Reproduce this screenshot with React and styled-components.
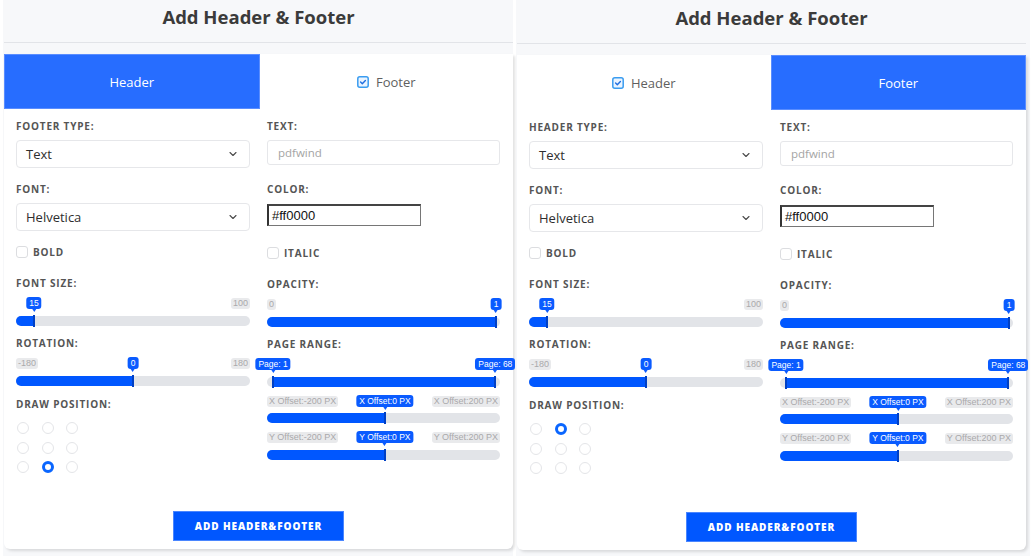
import React from "react";
import styled, { createGlobalStyle } from "styled-components";
import { ChevronDown } from "lucide-react";

const GlobalStyle = createGlobalStyle`
  html, body { margin: 0; padding: 0; background: #ffffff; }
  body { font-family: "Open Sans", "Liberation Sans", sans-serif; }
  * { box-sizing: border-box; }
`;

const Page = styled.div`
  display: flex;
  flex-direction: row;
  align-items: flex-start;
  gap: 3px;
  padding-left: 3px;
  width: 1033px;
  height: 556px;
  overflow: hidden;
`;

const Panel = styled.div`
  width: ${(p) => p.$width}px;
  height: 556px;
  background: #f7f8fa;
  padding-top: ${(p) => p.$shift}px;
  display: flex;
  flex-direction: column;
`;

const TitleBar = styled.div`
  width: 509px;
  margin-left: 1px;
  height: 43px;
  padding-bottom: 9px;
  border-bottom: 1px solid #e2e4e8;
  display: flex;
  align-items: center;
  justify-content: center;
  font-size: 18.5px;
  font-weight: 700;
  color: #3b3b3b;
`;

const Card = styled.div`
  width: 509px;
  height: 495px;
  margin: 11px 0 0 1px;
  background: #ffffff;
  border-radius: 0 0 6px 6px;
  box-shadow: 2px 2px 3px rgba(0, 0, 0, 0.12);
  display: flex;
  flex-direction: column;
`;

const Tabs = styled.div`
  display: flex;
  flex-direction: row;
  height: 55px;
`;

const Tab = styled.div`
  flex: 1;
  display: flex;
  align-items: center;
  justify-content: center;
  gap: 7px;
  padding-top: 1px;
  font-size: 13px;
  color: ${(p) => (p.$active ? "#ffffff" : "#5f5f5f")};
  background: ${(p) => (p.$active ? "#276dff" : "#ffffff")};
  border: ${(p) => (p.$active ? "1px solid #5a8dff" : "none")};
`;

const Columns = styled.div`
  display: grid;
  grid-template-columns: 234px 233px;
  column-gap: 17px;
  padding: 10px 0 0 12px;
`;

const Column = styled.div`
  display: flex;
  flex-direction: column;
`;

const Label = styled.div`
  height: 14px;
  line-height: 14px;
  font-size: 10px;
  font-weight: 700;
  letter-spacing: 0.8px;
  color: #555555;
  margin-top: ${(p) => p.$mt || 0}px;
`;

const Select = styled.div`
  margin-top: 7px;
  height: 28px;
  border: 1px solid #e6e7ea;
  border-radius: 4px;
  display: flex;
  align-items: center;
  justify-content: space-between;
  padding: 0 10px 0 9px;
  font-size: 13px;
  color: #2e2e2e;
`;

const TextInput = styled.div`
  margin-top: 7px;
  height: 25px;
  border: 1px solid #e6e7ea;
  border-radius: 3px;
  display: flex;
  align-items: center;
  padding: 0 10px;
  font-size: 11.5px;
  color: #a4a4a4;
`;

const ColorInput = styled.div`
  margin-top: 8px;
  width: 154px;
  height: 22px;
  border: 1px solid #767676;
  border-left: 2px solid #333333;
  border-top: 2px solid #444444;
  display: flex;
  align-items: center;
  padding: 0 3px;
  font-family: "Liberation Sans", Arial, sans-serif;
  font-size: 13px;
  color: #111111;
`;

const CheckRow = styled.div`
  margin-top: ${(p) => p.$mt}px;
  height: 14px;
  display: flex;
  align-items: center;
  gap: 5px;
  font-size: 10px;
  font-weight: 700;
  letter-spacing: 0.8px;
  color: #555555;
`;

const Box = styled.span`
  width: 12px;
  height: 12px;
  border: 1px solid #dcdde0;
  border-radius: 3px;
  background: #fff;
`;

const SliderWrap = styled.div`
  margin-top: ${(p) => p.$mt}px;
  display: flex;
  flex-direction: column;
  gap: ${(p) => p.$gap}px;
`;

const TipRow = styled.div`
  position: relative;
  height: 14px;
  display: flex;
  align-items: center;
  justify-content: space-between;
`;

const Bound = styled.span`
  height: 11px;
  line-height: 11px;
  padding: 0 2px;
  border-radius: 3px;
  background: ${(p) => (p.$empty ? "transparent" : "#e9eaec")};
  color: #a9a9ab;
  font-family: "Liberation Sans", Arial, sans-serif;
  font-size: 9px;
  white-space: nowrap;
`;

const Tip = styled.span`
  position: absolute;
  top: 1px;
  left: ${(p) => p.$pct}%;
  transform: translateX(-50%);
  height: 12px;
  line-height: 12px;
  padding: 0 3px;
  border-radius: 3px;
  background: #0a5bff;
  color: #ffffff;
  font-family: "Liberation Sans", Arial, sans-serif;
  font-size: 8.5px;
  white-space: nowrap;
  &::after {
    content: "";
    position: absolute;
    left: 50%;
    bottom: -3px;
    transform: translateX(-50%);
    border-left: 2px solid transparent;
    border-right: 2px solid transparent;
    border-top: 3px solid #0a5bff;
  }
`;

const Track = styled.div`
  position: relative;
  height: 10px;
  border-radius: 5px;
  background: #e2e4e8;
`;

const Fill = styled.div`
  position: absolute;
  top: 0;
  bottom: 0;
  left: ${(p) => p.$from}%;
  width: ${(p) => p.$to - p.$from}%;
  border-radius: ${(p) => (p.$from > 0 ? "0" : "5px 0 0 5px")};
  background: #0057ff;
`;

const Thumb = styled.div`
  position: absolute;
  top: -1px;
  left: ${(p) => p.$pct}%;
  width: 2px;
  height: 12px;
  margin-left: -1px;
  background: #0040c4;
`;

const Slider = ({ mt, gap = 6, min, max, thumbs, from = 0 }) => {
  const to = thumbs[thumbs.length - 1].pct;
  return (
    <SliderWrap $mt={mt} $gap={gap}>
      <TipRow>
        <Bound $empty={!min}>{min}</Bound>
        <Bound $empty={!max}>{max}</Bound>
        {thumbs.map((t) => (
          <Tip key={t.label} $pct={t.pct}>
            {t.label}
          </Tip>
        ))}
      </TipRow>
      <Track>
        <Fill $from={from} $to={to} />
        {thumbs.map((t) => (
          <Thumb key={t.label} $pct={t.pct} />
        ))}
      </Track>
    </SliderWrap>
  );
};

const RadioGrid = styled.div`
  margin-top: 11px;
  display: grid;
  grid-template-columns: repeat(3, 12px);
  column-gap: 12.5px;
  row-gap: 7.5px;
  padding-left: 1px;
`;

const Radio = styled.span`
  width: 12px;
  height: 12px;
  border-radius: 50%;
  background: #fff;
  border: ${(p) => (p.$on ? "3px solid #0a66ff" : "1px solid #e4e5e8")};
`;

const Footer = styled.div`
  margin-top: auto;
  margin-bottom: 8px;
  display: flex;
  justify-content: center;
`;

const Button = styled.button`
  width: 171px;
  height: 30px;
  border: 1px solid #4a86ff;
  background: #0057ff;
  color: #ffffff;
  font-family: "Open Sans", "Liberation Sans", sans-serif;
  font-size: 10px;
  font-weight: 800;
  letter-spacing: 0.9px;
`;

const TabCheck = () => (
  <svg width="12" height="12" viewBox="0 0 12 12">
    <rect x="0.8" y="0.8" width="10.4" height="10.4" rx="2" fill="#eaf4ff" stroke="#3a9cf0" strokeWidth="1.5" />
    <path d="M3.6 6.1 L5.3 7.7 L8.4 4.4" fill="none" stroke="#1f6fe0" strokeWidth="1.4" strokeLinecap="round" strokeLinejoin="round" />
  </svg>
);

const HeaderFooterPanel = ({ width, shift, mode, selected }) => {
  const isFooter = mode === "footer";
  return (
    <Panel $width={width} $shift={shift}>
      <TitleBar>Add Header &amp; Footer</TitleBar>
      <Card>
        <Tabs>
          <Tab $active={isFooter}>
            {!isFooter && <TabCheck />}
            Header
          </Tab>
          <Tab $active={!isFooter}>
            {isFooter && <TabCheck />}
            Footer
          </Tab>
        </Tabs>
        <Columns>
          <Column>
            <Label>{isFooter ? "FOOTER TYPE:" : "HEADER TYPE:"}</Label>
            <Select>
              Text
              <ChevronDown size={12} strokeWidth={2.2} color="#4a4a4a" />
            </Select>
            <Label $mt={14}>FONT:</Label>
            <Select>
              Helvetica
              <ChevronDown size={12} strokeWidth={2.2} color="#4a4a4a" />
            </Select>
            <CheckRow $mt={14}>
              <Box />
              BOLD
            </CheckRow>
            <Label $mt={17}>FONT SIZE:</Label>
            <Slider mt={6} min="" max="100" thumbs={[{ pct: 7.7, label: "15" }]} />
            <Label $mt={10}>ROTATION:</Label>
            <Slider mt={6} min="-180" max="180" thumbs={[{ pct: 50, label: "0" }]} />
            <Label $mt={11}>DRAW POSITION:</Label>
            <RadioGrid>
              {Array.from({ length: 9 }, (_, i) => (
                <Radio key={i} $on={i === selected} />
              ))}
            </RadioGrid>
          </Column>
          <Column>
            <Label>TEXT:</Label>
            <TextInput>pdfwind</TextInput>
            <Label $mt={17}>COLOR:</Label>
            <ColorInput>#ff0000</ColorInput>
            <CheckRow $mt={20}>
              <Box />
              ITALIC
            </CheckRow>
            <Label $mt={17}>OPACITY:</Label>
            <Slider mt={6} min="0" max="" thumbs={[{ pct: 98.3, label: "1" }]} />
            <Label $mt={10}>PAGE RANGE:</Label>
            <Slider
              mt={6}
              min=""
              max=""
              from={2.6}
              thumbs={[
                { pct: 2.6, label: "Page: 1" },
                { pct: 98, label: "Page: 68" },
              ]}
            />
            <Slider mt={7} gap={5} min="X Offset:-200 PX" max="X Offset:200 PX" thumbs={[{ pct: 50.6, label: "X Offset:0 PX" }]} />
            <Slider mt={7} gap={6} min="Y Offset:-200 PX" max="Y Offset:200 PX" thumbs={[{ pct: 50.6, label: "Y Offset:0 PX" }]} />
          </Column>
        </Columns>
        <Footer>
          <Button>ADD HEADER&amp;FOOTER</Button>
        </Footer>
      </Card>
    </Panel>
  );
};

const App = () => (
  <>
    <GlobalStyle />
    <Page>
      <HeaderFooterPanel width={510} shift={0} mode="footer" selected={7} />
      <HeaderFooterPanel width={514} shift={1} mode="header" selected={1} />
    </Page>
  </>
);

export default App;
